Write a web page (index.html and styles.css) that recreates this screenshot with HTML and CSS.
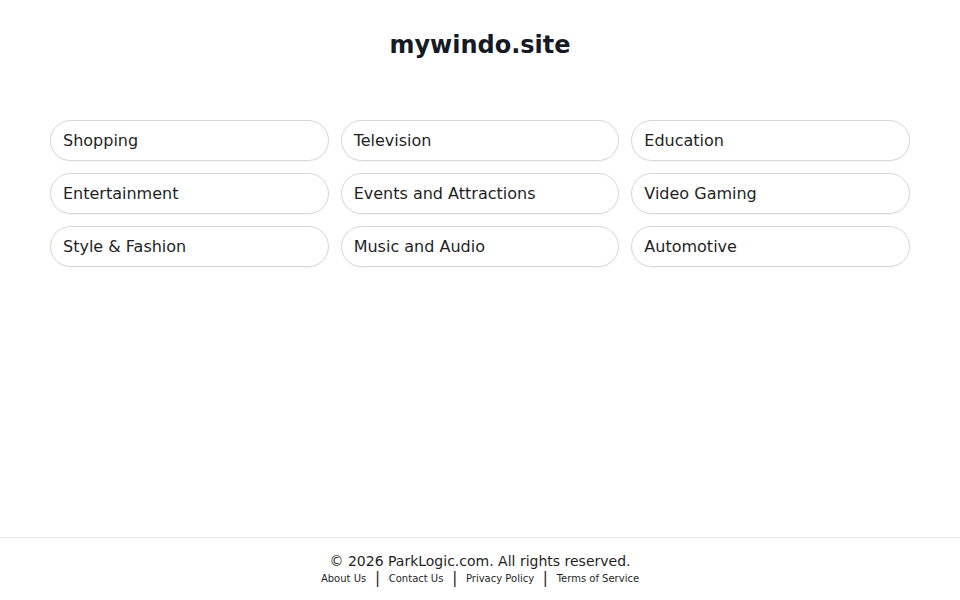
FILE: index.html
```html
<!DOCTYPE html>
<html lang="en">
<head>
<meta charset="utf-8">
<title>mywindo.site</title>
<link rel="stylesheet" href="styles.css">
</head>
<body>
<div class="page">
  <header class="header">
    <h1 class="title">mywindo.site</h1>
  </header>
  <main class="main">
    <div class="grid">
      <a class="pill" href="#">Shopping</a>
      <a class="pill" href="#">Television</a>
      <a class="pill" href="#">Education</a>
      <a class="pill" href="#">Entertainment</a>
      <a class="pill" href="#">Events and Attractions</a>
      <a class="pill" href="#">Video Gaming</a>
      <a class="pill" href="#">Style &amp; Fashion</a>
      <a class="pill" href="#">Music and Audio</a>
      <a class="pill" href="#">Automotive</a>
    </div>
  </main>
  <footer class="footer">
    <div class="copy">© 2026 ParkLogic.com. All rights reserved.</div>
    <nav class="links">
      <a href="#">About Us</a><span class="sep">|</span><a href="#">Contact Us</a><span class="sep">|</span><a href="#">Privacy Policy</a><span class="sep">|</span><a href="#">Terms of Service</a>
    </nav>
  </footer>
</div>
</body>
</html>
```
FILE: styles.css
```css
html, body {
  margin: 0;
  padding: 0;
  background: #ffffff;
  font-family: "DejaVu Sans", Verdana, sans-serif;
  color: #1f1f1f;
}
.page {
  min-height: 100vh;
  display: flex;
  flex-direction: column;
}
.header {
  padding-top: 31px;
  text-align: center;
}
.title {
  margin: 0;
  font-size: 24px;
  line-height: 28px;
  font-weight: bold;
  color: #151a26;
}
.main {
  flex: 1;
  padding: 61px 50px 0;
}
.grid {
  display: grid;
  grid-template-columns: repeat(3, 1fr);
  gap: 12px;
}
.pill {
  display: block;
  height: 39px;
  line-height: 39px;
  padding: 0 12px;
  border: 1px solid #d6d6d6;
  border-radius: 21px;
  font-size: 16px;
  color: #1f1f1f;
  text-decoration: none;
  box-shadow: 0 1px 2px rgba(0, 0, 0, 0.04);
}
.footer {
  border-top: 1px solid #e6e6e6;
  height: 63px;
  box-sizing: border-box;
  padding-top: 15px;
  text-align: center;
}
.copy {
  font-size: 14px;
  line-height: 17px;
  color: #1f1f1f;
}
.links {
  font-size: 10px;
  line-height: 16px;
}
.links a {
  color: #1f1f1f;
  text-decoration: none;
}
.sep {
  display: inline-block;
  font-size: 15px;
  margin: 0 8.75px;
  vertical-align: -1px;
  color: #1f1f1f;
}
```
